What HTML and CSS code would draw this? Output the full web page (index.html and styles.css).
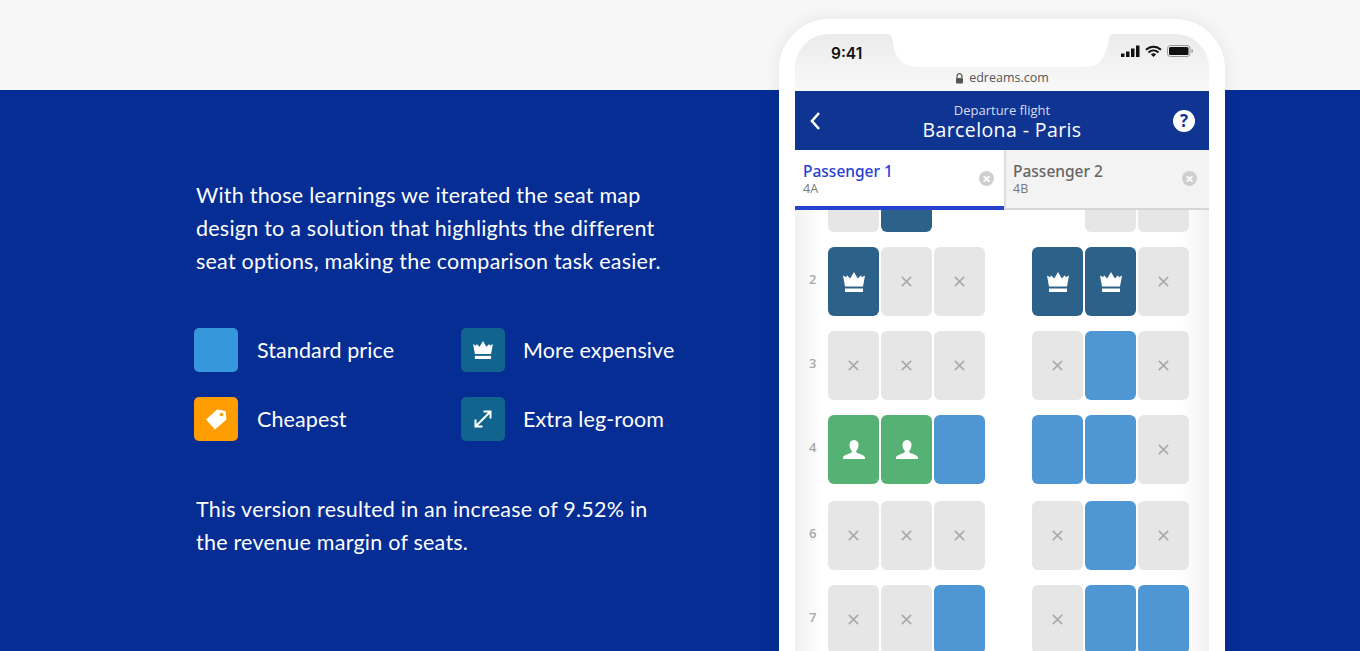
FILE: index.html
```html
<!DOCTYPE html>
<html>
	<head>
		<meta charset="UTF-8">
		<title>Seat map</title>
		<link rel="stylesheet" href="styles.css">
	</head>
	<body>
		<svg class="defs" width="0" height="0">
			<symbol id="crown" viewBox="0 0 22 20">
				<path d="M11 0l3.800 6.400L18 3.200l.8 2L22 3.400 20 14.500H2L0 3.400l3.200 1.800.8-2 3.200 3.200z" fill="#fff"/>
				<path d="M2 16.500h18V20H2z" fill="#fff"/>
			</symbol>
			<symbol id="cross" viewBox="0 0 14 14">
				<path d="M2 2l10 10M12 2L2 12" stroke="#ababab" stroke-width="1.800" fill="none"/>
			</symbol>
			<symbol id="person" viewBox="0 0 22 20">
				<path d="M11 0c3 0 4.500 2.200 4.500 5 0 2.500-1 4.500-2.200 5.700-.5.800 0 1.800 1 2.300 2.700 1 6.700 2 7.700 4.200V19H0v-1.800c1-2.200 5-3.200 7.700-4.200 1-.5 1.500-1.500 1-2.300C7.500 9.500 6.500 7.500 6.500 5 6.500 2.200 8 0 11 0z" fill="#fff"/>
			</symbol>
		</svg>
		<div class="page">
			<div class="band"></div>
			<div class="main">
				<div class="copy">
					<p class="intro">With those learnings we iterated the seat map design to a solution that highlights the different seat options, making the comparison task easier.</p>
					<ul class="legend">
						<li><i class="swatch sw-blue"></i>Standard price</li>
						<li>
							<i class="swatch sw-teal"><svg width="20" height="18"><use href="#crown"/></svg></i>More expensive
						</li>
						<li>
							<i class="swatch sw-orange">
								<svg width="24" height="24" viewBox="0 0 24 24"><path d="M13 2.500l8.500 1.500 1 8.500L11 22.500 2 12.500z" fill="#fff"/><circle cx="17.500" cy="7.500" r="1.800" fill="#ff9d00"/></svg>
							</i>Cheapest
						</li>
						<li>
							<i class="swatch sw-teal">
								<svg width="20" height="20" viewBox="0 0 20 20"><path d="M3 17L17 3M10.500 2.500h7v7M2.500 10.500v7h7" stroke="#fff" stroke-width="2" fill="none"/></svg>
							</i>Extra leg-room
						</li>
					</ul>
					<p class="outro">This version resulted in an increase of 9.52% in the revenue margin of seats.</p>
				</div>
				<div class="phone">
					<div class="screen">
						<div class="status">
							<svg class="notch" width="229" height="33" viewBox="0 0 229 33"><path d="M0 0C4 0 6 2 6.500 6 8 22 16 33 30 33H199C213 33 221 22 222.500 6 223 2 225 0 229 0Z" fill="#fff"/></svg>
							<div class="status-top">
								<span class="time">9:41</span>
								<span class="indicators">
									<svg width="19" height="12" viewBox="0 0 19 12"><path d="M0 8.500h3.500V12H0zM5 6.500h3.500V12H5zM10 3.500h3.500V12H10zM15 .5h3.500V12H15z" fill="#111"/></svg>
									<svg width="17" height="12" viewBox="0 0 17 12"><path d="M1 4.800c4.500-4.200 10.500-4.200 15 0M3.500 7.400c3-2.700 7-2.700 10 0" stroke="#111" stroke-width="2" fill="none"/><path d="M5.800 9.200c1.800-1.200 3.600-1.200 5.400 0L8.500 12z" fill="#111"/></svg>
									<svg width="26" height="12" viewBox="0 0 26 12"><rect x=".5" y=".5" width="22.500" height="11" rx="3" fill="none" stroke="#999"/><rect x="2" y="2" width="19.500" height="8" rx="1.500" fill="#111"/><path d="M24.500 4v4c1-.3 1.500-1 1.500-2s-.5-1.700-1.500-2z" fill="#999"/></svg>
								</span>
							</div>
							<div class="url">
								<svg width="9" height="11" viewBox="0 0 9 11"><path d="M2 5V3.200a2.500 2.500 0 0 1 5 0V5" fill="none" stroke="#555" stroke-width="1.200"/><rect x="1" y="5" width="7" height="5.500" rx="1" fill="#555"/></svg>
								edreams.com
							</div>
						</div>
						<div class="flight">
							<span class="back"><svg width="12" height="20" viewBox="0 0 12 20"><path d="M10 2L3 10l7 8" stroke="#fff" stroke-width="2.600" fill="none"/></svg></span>
							<div class="route">
								<small>Departure flight</small>
								<strong>Barcelona - Paris</strong>
							</div>
							<span class="help">?</span>
						</div>
						<div class="tabs">
							<div class="tab on">
								<div><b>Passenger 1</b><span>4A</span></div>
								<em>×</em>
							</div>
							<div class="tab">
								<div><b>Passenger 2</b><span>4B</span></div>
								<em>×</em>
							</div>
						</div>
						<div class="seats">
							<div class="row first">
								<span class="num"></span>
								<div class="group">
									<i class="seat"></i><i class="seat dark"></i><i class="seat none"></i>
								</div>
								<div class="group">
									<i class="seat none"></i><i class="seat"></i><i class="seat"></i>
								</div>
							</div>
							<div class="row">
								<span class="num">2</span>
								<div class="group">
									<i class="seat dark"><svg width="22" height="20"><use href="#crown"/></svg></i>
									<i class="seat"><svg width="13" height="13"><use href="#cross"/></svg></i>
									<i class="seat"><svg width="13" height="13"><use href="#cross"/></svg></i>
								</div>
								<div class="group">
									<i class="seat dark"><svg width="22" height="20"><use href="#crown"/></svg></i>
									<i class="seat dark"><svg width="22" height="20"><use href="#crown"/></svg></i>
									<i class="seat"><svg width="13" height="13"><use href="#cross"/></svg></i>
								</div>
							</div>
							<div class="row">
								<span class="num">3</span>
								<div class="group">
									<i class="seat"><svg width="13" height="13"><use href="#cross"/></svg></i>
									<i class="seat"><svg width="13" height="13"><use href="#cross"/></svg></i>
									<i class="seat"><svg width="13" height="13"><use href="#cross"/></svg></i>
								</div>
								<div class="group">
									<i class="seat"><svg width="13" height="13"><use href="#cross"/></svg></i>
									<i class="seat free"></i>
									<i class="seat"><svg width="13" height="13"><use href="#cross"/></svg></i>
								</div>
							</div>
							<div class="row">
								<span class="num">4</span>
								<div class="group">
									<i class="seat taken"><svg width="22" height="20"><use href="#person"/></svg></i>
									<i class="seat taken"><svg width="22" height="20"><use href="#person"/></svg></i>
									<i class="seat free"></i>
								</div>
								<div class="group">
									<i class="seat free"></i>
									<i class="seat free"></i>
									<i class="seat"><svg width="13" height="13"><use href="#cross"/></svg></i>
								</div>
							</div>
							<div class="row after-gap">
								<span class="num">6</span>
								<div class="group">
									<i class="seat"><svg width="13" height="13"><use href="#cross"/></svg></i>
									<i class="seat"><svg width="13" height="13"><use href="#cross"/></svg></i>
									<i class="seat"><svg width="13" height="13"><use href="#cross"/></svg></i>
								</div>
								<div class="group">
									<i class="seat"><svg width="13" height="13"><use href="#cross"/></svg></i>
									<i class="seat free"></i>
									<i class="seat"><svg width="13" height="13"><use href="#cross"/></svg></i>
								</div>
							</div>
							<div class="row">
								<span class="num">7</span>
								<div class="group">
									<i class="seat"><svg width="13" height="13"><use href="#cross"/></svg></i>
									<i class="seat"><svg width="13" height="13"><use href="#cross"/></svg></i>
									<i class="seat free"></i>
								</div>
								<div class="group">
									<i class="seat"><svg width="13" height="13"><use href="#cross"/></svg></i>
									<i class="seat free"></i>
									<i class="seat free"></i>
								</div>
							</div>
						</div>
					</div>
				</div>
			</div>
		</div>
	</body>
</html>
```

FILE: styles.css
```css
html,body,p,ul,li{
	margin: 0;
	padding: 0;
	list-style: none;
}
body{
	font-family: "Lato", "Liberation Sans", sans-serif;
	background: #052d93;
}
.defs{
	position: absolute;
}
.page{
	height: 651px;
	overflow: hidden;
}
.band{
	height: 90px;
	background: #f7f7f7;
}
.main{
	display: flex;
	height: 561px;
	background: #052d93;
	padding-left: 196px;
}
.copy{
	width: 583px;
	padding-top: 89px;
	color: #fff;
	font-size: 21.500px;
	line-height: 33px;
	letter-spacing: .23px;
}
.intro{
	width: 470px;
}
.legend{
	display: grid;
	grid-template-columns: 267px 220px;
	row-gap: 25px;
	margin: 50px 0 52px -2px;
	letter-spacing: .1px;
}
.legend li{
	display: flex;
	align-items: center;
	gap: 19px;
	height: 44px;
}
.legend li:nth-child(even){
	gap: 18px;
}
.swatch{
	display: flex;
	align-items: center;
	justify-content: center;
	width: 44px;
	height: 44px;
	border-radius: 5px;
}
.sw-blue{
	background: #3797dd;
}
.sw-teal{
	background: #10648d;
}
.sw-orange{
	background: #ff9d00;
}
.outro{
	width: 470px;
}

/* phone */
.phone{
	width: 446px;
	height: 720px;
	flex: none;
	margin-top: -71px;
	padding: 15px 16px 0;
	box-sizing: border-box;
	background: #fff;
	border-radius: 50px 50px 0 0;
	box-shadow: 0 0 18px rgba(0,0,0,.08);
}
.screen{
	height: 705px;
	overflow: hidden;
	border-radius: 34px 34px 0 0;
	font-family: "Open Sans", "Liberation Sans", sans-serif;
	background: linear-gradient(90deg, #f1f1f1 0, #fff 28px, #fff 386px, #f1f1f1 414px);
}
.status{
	position: relative;
	height: 57px;
	background: linear-gradient(#ebebeb, #f9f9f9);
}
.notch{
	position: absolute;
	left: 91px;
	top: 0;
}
.status-top{
	position: relative;
	display: flex;
	justify-content: space-between;
	align-items: center;
	height: 36px;
	padding: 0 16px 0 36px;
	box-sizing: border-box;
}
.time{
	font: 600 15.500px "Inter", sans-serif;
	color: #111;
	position: relative;
	top: 1px;
}
.indicators{
	display: flex;
	align-items: center;
	gap: 5px;
	position: relative;
	top: -1px;
}
.url{
	display: flex;
	align-items: center;
	justify-content: center;
	gap: 5px;
	font-size: 12.500px;
	line-height: 16px;
	color: #555;
}
.flight{
	display: flex;
	align-items: center;
	height: 59px;
	padding: 0 14px;
	box-sizing: border-box;
	background: #0f3492;
	color: #fff;
}
.back{
	display: flex;
	width: 22px;
}
.route{
	flex: 1;
	text-align: center;
}
.route small{
	display: block;
	font-size: 13px;
	line-height: 18px;
	color: #d5dcf0;
}
.route strong{
	display: block;
	font-size: 19.500px;
	line-height: 22px;
	font-weight: 400;
	letter-spacing: .4px;
}
.help{
	width: 22px;
	height: 22px;
	border-radius: 50%;
	background: #fff;
	color: #0f3492;
	font: bold 17px/22px "Open Sans", sans-serif;
	text-align: center;
}
.tabs{
	display: flex;
	height: 60px;
}
.tab{
	flex: 1;
	display: flex;
	align-items: center;
	justify-content: space-between;
	box-sizing: border-box;
	padding: 0 12px 2px 7px;
	background: #f3f3f3;
	border-left: 2px solid #dcdcdc;
	border-bottom: 2px solid #d6d6d6;
}
.tab.on{
	flex: none;
	width: 209px;
	padding: 0 10px 0 8px;
	background: #fff;
	border-left: 0;
	border-bottom: 4px solid #2742cf;
}
.tab b{
	display: block;
	font-family: "Noto Sans", "Open Sans", sans-serif;
	font-size: 15.500px;
	line-height: 20px;
	font-weight: 500;
	color: #666;
}
.tab.on b{
	color: #2742cf;
}
.tab span{
	display: block;
	font-size: 12.500px;
	line-height: 15px;
	color: #777;
}
.tab em{
	width: 15px;
	height: 15px;
	border-radius: 50%;
	background: #cfcfcf;
	color: #fff;
	font: bold 15px/15px "Open Sans", sans-serif;
	text-align: center;
}
.seats{
	height: 450px;
	overflow: hidden;
}
.row{
	display: flex;
	align-items: center;
	height: 69px;
	margin-top: 15px;
}
.row.first{
	margin-top: -47px;
}
.row.after-gap{
	margin-top: 17px;
}
.num{
	flex: none;
	width: 33px;
	padding: 0 0 5px 14px;
	box-sizing: border-box;
	font-size: 13px;
	font-weight: 600;
	color: #a8a8a8;
}
.group{
	display: flex;
	flex: none;
	gap: 2px;
}
.group + .group{
	margin-left: 47px;
}
.seat{
	display: flex;
	align-items: center;
	justify-content: center;
	width: 51px;
	height: 69px;
	border-radius: 6px;
	background: #e6e6e6;
}
.seat.none{
	background: none;
}
.seat.dark{
	background: #2c6189;
}
.seat.free{
	background: #4f96d4;
}
.seat.taken{
	background: #56b274;
}
```
